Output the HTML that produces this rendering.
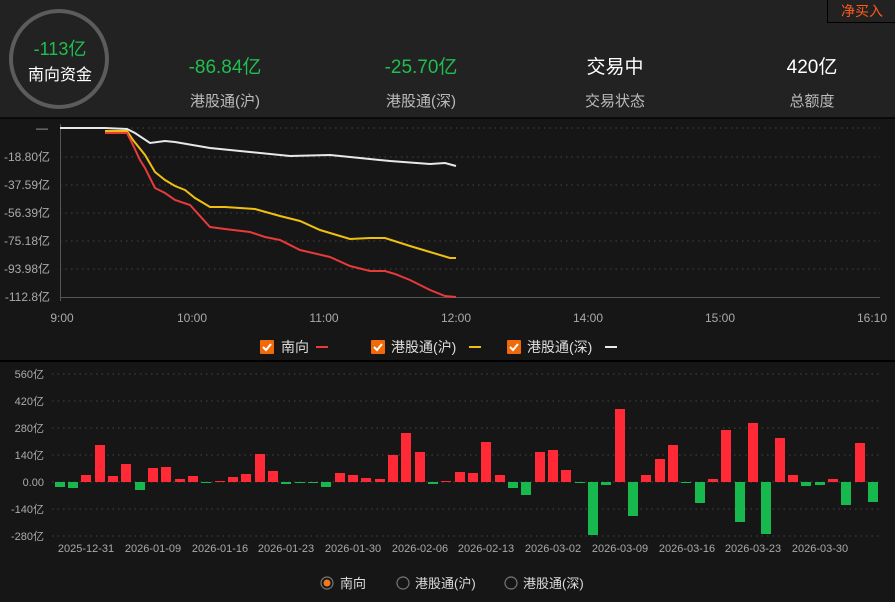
<!DOCTYPE html>
<html><head><meta charset="utf-8"><style>
body{margin:0;width:895px;height:602px;background:#161616;overflow:hidden;font-family:"Liberation Sans","Noto Sans CJK SC",sans-serif;position:relative}
.hdr{position:absolute;left:0;top:0;width:895px;height:117px;background:#222;border-bottom:2px solid #0a0a0a}
.a{position:absolute;white-space:nowrap}
.g{color:#1fbf4f}
</style></head><body>
<div class="hdr"></div>
<div class="a" style="left:827px;top:0;width:68px;height:22px;border-left:1px solid #000;border-bottom:1px solid #000;color:#ff5a1a;font-size:14px;line-height:22px;text-align:center">净买入</div>
<div class="a" style="left:9px;top:9px;width:100px;height:100px;border:4px solid #5c5c5c;border-radius:50%;box-sizing:border-box"></div>
<div class="a g" style="left:0;top:35px;width:120px;text-align:center;font-size:18px">-113亿</div>
<div class="a" style="left:0;top:61px;width:120px;text-align:center;font-size:16px;color:#fff">南向资金</div>
<div class="a g" style="left:165px;top:52px;width:120px;text-align:center;font-size:19px">-86.84亿</div>
<div class="a" style="left:165px;top:90px;width:120px;text-align:center;font-size:15px;color:#bbb">港股通(沪)</div>
<div class="a g" style="left:361px;top:52px;width:120px;text-align:center;font-size:19px">-25.70亿</div>
<div class="a" style="left:361px;top:90px;width:120px;text-align:center;font-size:15px;color:#bbb">港股通(深)</div>
<div class="a" style="left:555px;top:52px;width:120px;text-align:center;font-size:19px;color:#fff">交易中</div>
<div class="a" style="left:555px;top:90px;width:120px;text-align:center;font-size:15px;color:#bbb">交易状态</div>
<div class="a" style="left:752px;top:52px;width:120px;text-align:center;font-size:19px;color:#fff">420亿</div>
<div class="a" style="left:752px;top:90px;width:120px;text-align:center;font-size:15px;color:#bbb">总额度</div>

<svg class="a" style="left:0;top:0" width="895" height="602" font-family="Liberation Sans, Noto Sans CJK SC, sans-serif">
<g stroke="#444" stroke-dasharray="1.5 4">
<line x1="60" x2="880" y1="128" y2="128"/><line x1="60" x2="880" y1="157" y2="157"/><line x1="60" x2="880" y1="185" y2="185"/><line x1="60" x2="880" y1="213" y2="213"/><line x1="60" x2="880" y1="241" y2="241"/><line x1="60" x2="880" y1="269" y2="269"/>
</g>
<line x1="60" x2="880" y1="297.5" y2="297.5" stroke="#555"/>
<line x1="60.5" x2="60.5" y1="124" y2="301" stroke="#555"/>
<g fill="#aaa" font-size="12" text-anchor="end">
<text x="48" y="132">—</text><text x="50" y="161">-18.80亿</text><text x="50" y="189">-37.59亿</text><text x="50" y="217">-56.39亿</text><text x="50" y="245">-75.18亿</text><text x="50" y="273">-93.98亿</text><text x="50" y="301">-112.8亿</text>
</g>
<g fill="#aaa" font-size="12" text-anchor="middle">
<text x="62" y="322">9:00</text><text x="192" y="322">10:00</text><text x="324" y="322">11:00</text><text x="456" y="322">12:00</text><text x="588" y="322">14:00</text><text x="720" y="322">15:00</text><text x="872" y="322">16:10</text>
</g>
<g fill="none" stroke-width="2">
<polyline stroke="#e8e8e8" points="60,128 105,128 127,129 135,133 150,143 165,141 175,142 210,148 250,152 290,156 330,155 360,158 390,161 430,164 445,163 456,166"/>
<polyline stroke="#f0c010" points="105,131 127,131 133,140 145,155 155,172 165,180 175,186 185,190 195,198 210,207 225,207 255,209 280,216 300,221 320,230 350,239 370,238 385,238 410,246 430,252 450,258 456,258"/>
<polyline stroke="#e83a3a" points="105,133 127,133 133,145 140,160 145,168 150,178 155,188 165,193 175,200 190,205 210,227 225,229 250,232 265,237 280,240 300,250 330,257 350,266 370,271 385,271 395,274 410,280 430,290 445,296 456,297"/>
</g>
<line x1="0" x2="895" y1="361" y2="361" stroke="#000" stroke-width="2"/>
<g font-size="14" fill="#ddd">
<rect x="260" y="340" width="14" height="14" fill="#f06a0a" rx="1"/><path d="M263 347l3 3 5-6" stroke="#fff" stroke-width="2" fill="none"/><text x="281" y="352">南向</text><line x1="316" x2="328" y1="347" y2="347" stroke="#e83a3a" stroke-width="2"/>
<rect x="371" y="340" width="14" height="14" fill="#f06a0a" rx="1"/><path d="M374 347l3 3 5-6" stroke="#fff" stroke-width="2" fill="none"/><text x="391" y="352">港股通(沪)</text><line x1="469" x2="481" y1="347" y2="347" stroke="#f0c010" stroke-width="2"/>
<rect x="507" y="340" width="14" height="14" fill="#f06a0a" rx="1"/><path d="M510 347l3 3 5-6" stroke="#fff" stroke-width="2" fill="none"/><text x="527" y="352">港股通(深)</text><line x1="605" x2="617" y1="347" y2="347" stroke="#e8e8e8" stroke-width="2"/>
</g>
<g stroke="#444" stroke-dasharray="1.5 4">
<line x1="52" x2="880" y1="374" y2="374"/><line x1="52" x2="880" y1="401" y2="401"/><line x1="52" x2="880" y1="428" y2="428"/><line x1="52" x2="880" y1="455" y2="455"/><line x1="52" x2="880" y1="482" y2="482"/><line x1="52" x2="880" y1="509" y2="509"/><line x1="52" x2="880" y1="536" y2="536"/>
</g>
<g fill="#aaa" font-size="11" text-anchor="end">
<text x="44" y="378">560亿</text><text x="44" y="405">420亿</text><text x="44" y="432">280亿</text><text x="44" y="459">140亿</text><text x="44" y="486">0.00</text><text x="44" y="513">-140亿</text><text x="44" y="540">-280亿</text>
</g>
<g fill="#aaa" font-size="11" text-anchor="middle">
<text x="86" y="552">2025-12-31</text><text x="153" y="552">2026-01-09</text><text x="220" y="552">2026-01-16</text><text x="286" y="552">2026-01-23</text><text x="353" y="552">2026-01-30</text><text x="420" y="552">2026-02-06</text><text x="486" y="552">2026-02-13</text><text x="553" y="552">2026-03-02</text><text x="620" y="552">2026-03-09</text><text x="687" y="552">2026-03-16</text><text x="753" y="552">2026-03-23</text><text x="820" y="552">2026-03-30</text>
</g>
<g id="bars"></g>
<g font-size="13" fill="#ddd">
<circle cx="327" cy="583" r="6" fill="none" stroke="#777" stroke-width="1.2"/><circle cx="327" cy="583" r="3.5" fill="#f07a20"/><text x="340" y="588">南向</text>
<circle cx="403" cy="583" r="6" fill="none" stroke="#777" stroke-width="1.2"/><text x="415" y="588">港股通(沪)</text>
<circle cx="511" cy="583" r="6" fill="none" stroke="#777" stroke-width="1.2"/><text x="523" y="588">港股通(深)</text>
</g>
</svg>
<script>
var v=[-5,-6,7,37,6,18,-8,14,15,3,6,-1,1,5,8,28,11,-2,-1,-1,-5,9,7,4,3,27,49,30,-2,1,10,9,40,7,-6,-13,30,32,12,-1,-53,-3,73,-34,7,23,37,-1,-21,3,52,-40,59,-52,44,7,-4,-3,3,-23,39,-20];
var xs=[55,68,81,95,108,121,135,148,161,175,188,201,215,228,241,255,268,281,295,308,321,335,348,361,375,388,401,415,428,441,455,468,481,495,508,521,535,548,561,575,588,601,615,628,641,655,668,681,695,708,721,735,748,761,775,788,801,815,828,841,855,868];
var s='';for(var i=0;i<v.length;i++){var h=v[i],y=h>0?482-h:482;var hh=Math.max(Math.abs(h),1);s+='<rect x="'+xs[i]+'" y="'+y+'" width="10" height="'+hh+'" fill="'+(h>0?'#ff2a36':'#17b94e')+'"/>';}
document.getElementById('bars').innerHTML=s;
</script>
</body></html>
